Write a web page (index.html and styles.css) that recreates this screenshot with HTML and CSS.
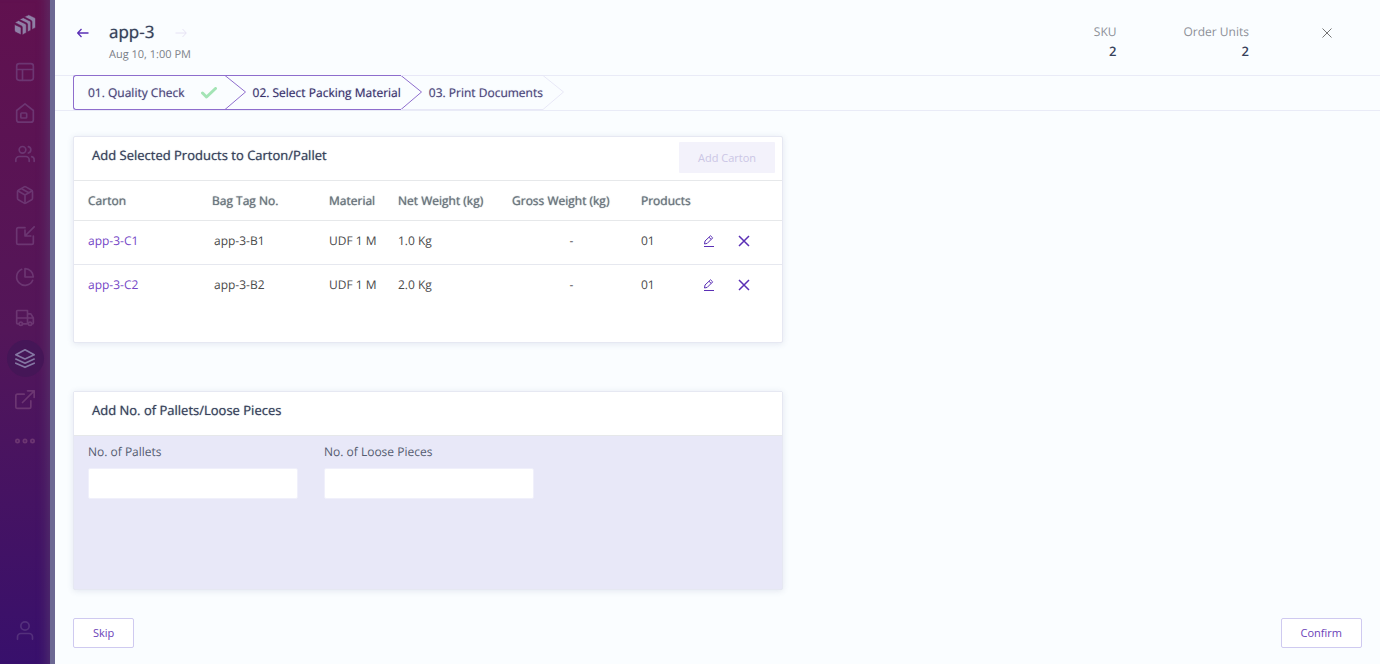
FILE: index.html
```html
<!DOCTYPE html>
<html lang="en">
<head>
    <meta charset="UTF-8">
    <meta name="viewport" content="width=device-width, initial-scale=1.0">
    <title>Select Packing Material</title>
    <link rel="stylesheet" href="styles.css">
</head>
<body>
    <nav class="sidebar" aria-label="Main">
        <a href="#" class="logo" aria-label="Home page">
            <svg width="22" height="22" viewBox="0 0 22 22">
                <path d="M.500 10.500l6.500 3v7.300l-5.300-2.600Q.500 17.500.500 16z"/>
                <path d="M.800 8.500l3.700-2 6.800 3.300q1 .6 1 1.700v7.200L8.300 21v-7.800q0-1-.8-1.300z"/>
                <path d="M5.500 5.500L9.200 3.700 15.800 7q1 .5 1 1.600v7.600l-3.200 1.800v-7.500q0-1-.9-1.500z"/>
                <path d="M10.300 2.800L14.800.800l5.700 2.800q1 .5 1 1.600v7.500q0 1-.9 1.500l-2.600 1.400V8q0-1.200-1-1.700z"/>
            </svg>
        </a>
        <a href="#" class="nav-item" aria-label="Dashboard">
            <svg class="icon" viewBox="0 0 24 24"><rect x="2" y="2" width="20" height="20" rx="3"/><path d="M2 9h20M9 22V9"/></svg>
        </a>
        <a href="#" class="nav-item" aria-label="Warehouse">
            <svg class="icon" viewBox="0 0 24 24"><path d="M2 9l10-8 10 8v11a3 3 0 0 1-3 3H5a3 3 0 0 1-3-3z"/><rect x="7" y="12" width="7" height="6" rx="1"/></svg>
        </a>
        <a href="#" class="nav-item" aria-label="Users">
            <svg class="icon" viewBox="0 0 24 24"><path d="M17 21v-2a4 4 0 0 0-4-4H5a4 4 0 0 0-4 4v2"/><circle cx="9" cy="7" r="4"/><path d="M23 21v-2a4 4 0 0 0-3-3.870M16 3.130a4 4 0 0 1 0 7.750"/></svg>
        </a>
        <a href="#" class="nav-item" aria-label="Products">
            <svg class="icon" viewBox="0 0 24 24"><path d="M16.500 9.400l-9-5.190M21 16V8a2 2 0 0 0-1-1.730l-7-4a2 2 0 0 0-2 0l-7 4A2 2 0 0 0 3 8v8a2 2 0 0 0 1 1.730l7 4a2 2 0 0 0 2 0l7-4A2 2 0 0 0 21 16z"/><path d="M3.270 6.960L12 12l8.730-5.040M12 22V12"/></svg>
        </a>
        <a href="#" class="nav-item" aria-label="Inbound">
            <svg class="icon" viewBox="0 0 24 24"><path d="M12 2H4a2 2 0 0 0-2 2v16a2 2 0 0 0 2 2h16a2 2 0 0 0 2-2v-8"/><path d="M23 1L12 12M12 5v7h7"/></svg>
        </a>
        <a href="#" class="nav-item" aria-label="Reports">
            <svg class="icon" viewBox="0 0 24 24"><path d="M21.210 15.890A10 10 0 1 1 8 2.830"/><path d="M22 12A10 10 0 0 0 12 2v10z"/></svg>
        </a>
        <a href="#" class="nav-item" aria-label="Shipping">
            <svg class="icon" viewBox="0 0 24 24"><path d="M5 19H3a1 1 0 0 1-1-1V4a1 1 0 0 1 1-1h12v16H9M15 7h4l3 5v6a1 1 0 0 1-1 1M2 12h20"/><circle cx="7" cy="19" r="2"/><circle cx="18" cy="19" r="2"/></svg>
        </a>
        <a href="#" class="nav-item active" aria-label="Packing" aria-current="page">
            <svg class="icon" viewBox="0 0 24 24"><path d="M12 1L1 7l11 5 11-5zM1 17l11 5 11-5M1 12l11 5 11-5"/></svg>
        </a>
        <a href="#" class="nav-item" aria-label="Outbound">
            <svg class="icon" viewBox="0 0 24 24"><path d="M19 13v7a2 2 0 0 1-2 2H3a2 2 0 0 1-2-2V7a2 2 0 0 1 2-2h8"/><path d="M15 1h8v8M9 15L23 1"/></svg>
        </a>
        <a href="#" class="nav-item" aria-label="More">
            <svg class="icon" viewBox="0 0 24 24"><circle cx="3" cy="12" r="2"/><circle cx="12" cy="12" r="2"/><circle cx="21" cy="12" r="2"/></svg>
        </a>
        <a href="#" class="nav-item profile" aria-label="Profile">
            <svg class="icon" viewBox="0 0 24 24"><path d="M3 22v-3a4 4 0 0 1 4-4h10a4 4 0 0 1 4 4v3"/><circle cx="12" cy="6" r="5"/></svg>
        </a>
    </nav>

    <div class="page">
        <header class="page-header">
            <button class="icon-btn back" aria-label="Previous order">
                <svg width="12" height="10" viewBox="0 0 12 10"><path d="M11.500 5H1M4.500 1L.700 5l3.800 4"/></svg>
            </button>
            <div class="order">
                <div class="order-title">
                    <h1>app-3</h1>
                    <button class="icon-btn next" aria-label="Next order" disabled>
                        <svg width="12" height="10" viewBox="0 0 12 10"><path d="M.500 5H11M7.500 1l3.800 4-3.800 4"/></svg>
                    </button>
                </div>
                <p>Aug 10, 1:00 PM</p>
            </div>
            <dl class="totals">
                <div><dt>SKU</dt><dd>2</dd></div>
                <div><dt>Order Units</dt><dd>2</dd></div>
            </dl>
            <button class="icon-btn close" aria-label="Close">
                <svg width="10" height="10" viewBox="0 0 10 10"><path d="M.500.500l9 9M9.500.500l-9 9"/></svg>
            </button>
        </header>

        <!-- Steps -->
        <ol class="steps">
            <li class="step done">
                <a href="#">01. Quality Check</a>
                <svg class="check" width="16" height="12" viewBox="0 0 16 12"><path d="M1.500 6l4 4 9-8.500"/></svg>
                <svg class="arrow" width="22" height="35" viewBox="0 0 22 35"><path d="M0 .500l20.500 16.500L0 34.500"/></svg>
            </li>
            <li class="step current">
                <a href="#" aria-current="step">02. Select Packing Material</a>
                <svg class="arrow" width="22" height="35" viewBox="0 0 22 35"><path d="M0 .500l20.500 16.500L0 34.500"/></svg>
            </li>
            <li class="step">
                <a href="#">03. Print Documents</a>
                <svg class="arrow" width="22" height="35" viewBox="0 0 22 35"><path d="M0 .500l20.500 16.500L0 34.500"/></svg>
            </li>
        </ol>

        <main>
            <!-- Cartons -->
            <section class="card cartons">
                <div class="card-header">
                    <h2>Add Selected Products to Carton/Pallet</h2>
                    <button class="add-btn" disabled>Add Carton</button>
                </div>
                <table>
                    <thead>
                        <tr>
                            <th class="col-carton">Carton</th>
                            <th class="col-bag">Bag Tag No.</th>
                            <th class="col-material">Material</th>
                            <th class="col-net">Net Weight (kg)</th>
                            <th class="col-gross">Gross Weight (kg)</th>
                            <th class="col-products">Products</th>
                            <th class="col-edit"></th>
                            <th></th>
                        </tr>
                    </thead>
                    <tbody>
                        <tr>
                            <td class="col-carton"><a href="#">app-3-C1</a></td>
                            <td class="bag">app-3-B1</td>
                            <td>UDF 1 M</td>
                            <td>1.0 Kg</td>
                            <td class="gross">-</td>
                            <td>01</td>
                            <td><button class="icon-btn edit" aria-label="Edit app-3-C1"><svg width="12" height="12" viewBox="0 0 12 12"><path d="M1 11.500h10M1.500 9l.5-3L7.500.800l2.200 2.100L4.200 8.400zM6 2.300l2.200 2.100"/></svg></button></td>
                            <td><button class="icon-btn remove" aria-label="Remove app-3-C1"><svg width="12" height="12" viewBox="0 0 12 12"><path d="M1 1l10 10M11 1L1 11"/></svg></button></td>
                        </tr>
                        <tr>
                            <td class="col-carton"><a href="#">app-3-C2</a></td>
                            <td class="bag">app-3-B2</td>
                            <td>UDF 1 M</td>
                            <td>2.0 Kg</td>
                            <td class="gross">-</td>
                            <td>01</td>
                            <td><button class="icon-btn edit" aria-label="Edit app-3-C2"><svg width="12" height="12" viewBox="0 0 12 12"><path d="M1 11.500h10M1.500 9l.5-3L7.500.800l2.200 2.100L4.200 8.400zM6 2.300l2.200 2.100"/></svg></button></td>
                            <td><button class="icon-btn remove" aria-label="Remove app-3-C2"><svg width="12" height="12" viewBox="0 0 12 12"><path d="M1 1l10 10M11 1L1 11"/></svg></button></td>
                        </tr>
                    </tbody>
                </table>
            </section>

            <!-- Pallets -->
            <section class="card pallets">
                <div class="card-header">
                    <h2>Add No. of Pallets/Loose Pieces</h2>
                </div>
                <form class="fields">
                    <div class="field">
                        <label for="pallets">No. of Pallets</label>
                        <input type="text" id="pallets">
                    </div>
                    <div class="field">
                        <label for="pieces">No. of Loose Pieces</label>
                        <input type="text" id="pieces">
                    </div>
                </form>
            </section>
        </main>

        <footer class="actions">
            <button class="btn">Skip</button>
            <button class="btn">Confirm</button>
        </footer>
    </div>
</body>
</html>
```
FILE: styles.css
```css
* {
    box-sizing: border-box;
}
body {
    display: flex;
    min-height: 100vh;
    margin: 0;
    background: #fafdff;
    color: #4a4a4a;
    font-family: "Open Sans", "Noto Sans", sans-serif;
    font-size: 12px;
    line-height: 18px;
    text-rendering: geometricPrecision;
}
h1, h2, p, dl, dd, ol {
    margin: 0;
    padding: 0;
}
a {
    color: inherit;
    text-decoration: none;
}
button, input {
    font: inherit;
}
svg {
    display: block;
    fill: none;
    stroke: currentColor;
}

/* sidebar */
.sidebar {
    display: flex;
    flex-direction: column;
    align-items: center;
    gap: 4px;
    flex: 0 0 55px;
    padding: 14px 0 15px;
    border-right: 5px solid #6c6893;
    background: linear-gradient(#61114f, #531659 50%, #38106c);
    box-shadow: inset -12px 0 10px -8px rgba(90, 60, 110, 0.6);
}
.logo {
    margin-bottom: 13px;
    color: #8f7fa6;
}
.logo svg {
    fill: currentColor;
    stroke: #61114f;
    stroke-width: 0.6;
}
.nav-item {
    display: flex;
    align-items: center;
    justify-content: center;
    width: 37px;
    height: 37px;
    border-radius: 50%;
    color: #6c3672;
}
.nav-item.active {
    background: #451657;
    color: #8577a3;
}
.nav-item.profile {
    margin-top: auto;
    color: #54307c;
}
.icon {
    width: 20px;
    height: 20px;
    stroke-width: 2;
    stroke-linecap: round;
    stroke-linejoin: round;
}

/* header */
.page {
    display: flex;
    flex-direction: column;
    flex: 1;
    min-width: 0;
}
.page-header {
    display: flex;
    height: 75px;
    padding: 20px 48px 0 22px;
}
.icon-btn {
    display: flex;
    align-items: center;
    padding: 0;
    border: none;
    background: none;
    color: #5a2fb5;
    cursor: pointer;
}
.page-header .icon-btn {
    height: 26px;
}
.icon-btn.back svg {
    stroke-width: 1.3;
}
.icon-btn.next {
    color: #e6e2f4;
}
.icon-btn.close {
    color: #757575;
}
.order {
    margin-left: 20px;
}
.order-title {
    display: flex;
    gap: 21px;
}
h1 {
    color: #36415a;
    font-size: 17px;
    font-weight: 500;
    line-height: 24px;
    text-shadow: 0 0 1px #7a8296;
}
.order p {
    color: #7b8087;
    font-size: 11px;
}
.totals {
    display: flex;
    gap: 67px;
    margin: 2px 73px 0 auto;
    text-align: right;
}
.totals dt {
    color: #8d9098;
    line-height: 20px;
}
.totals dd {
    color: #36415a;
    font-size: 13px;
    font-weight: 600;
    line-height: 18px;
}

/* steps */
.steps {
    display: flex;
    height: 36px;
    padding-left: 18px;
    border: solid #e9ebf7;
    border-width: 1px 0;
    list-style: none;
}
.step {
    position: relative;
    display: flex;
    align-items: center;
    height: 35px;
    margin-top: -1px;
    padding-left: 28px;
    border: solid #e8e8f7;
    border-width: 1px 0;
    color: #4a4579;
    font-weight: 500;
    text-shadow: 0 0 1px #a29fc0;
}
.step.done, .step.current {
    border-color: #8e6dcd;
}
.step.done {
    padding: 0 8px 0 14px;
    border-left-width: 1px;
    border-radius: 3px 0 0 3px;
}
.step.current {
    color: #37306a;
}
.check {
    margin-left: 16px;
    color: #a3e4b5;
    stroke-width: 3;
    stroke-linecap: round;
    stroke-linejoin: round;
}
.arrow {
    position: absolute;
    top: -1px;
    left: 100%;
    color: #e8e8f7;
}
.done .arrow, .current .arrow {
    color: #8e6dcd;
}

/* cards */
main {
    display: flex;
    flex-direction: column;
    gap: 48px;
    padding: 25px 16px 28px 18px;
}
.card {
    width: 55%;
    min-width: 690px;
    border: 1px solid #e6e8f2;
    border-radius: 2px;
    background: #fff;
    box-shadow: 0 1px 6px rgba(60, 70, 130, 0.12);
}
.card-header {
    display: flex;
    justify-content: space-between;
    height: 44px;
    padding: 5px 7px 0 18px;
    border-bottom: 1px solid #e6e8ea;
}
h2 {
    color: #36415a;
    font-size: 13px;
    font-weight: 500;
    line-height: 26px;
    text-shadow: 0 0 1px #7a8296;
}
.add-btn {
    width: 96px;
    height: 31px;
    border: none;
    border-radius: 1px;
    background: #f3f2fb;
    color: #cbc6e5;
    font-size: 11px;
}
.cartons {
    min-height: 207px;
}
table {
    width: 100%;
    border-spacing: 0;
    table-layout: fixed;
    text-align: left;
}
th, td {
    height: 44px;
    padding: 0 0 4px;
    white-space: nowrap;
}
th {
    height: 40px;
    padding: 0;
    border-bottom: 1px solid #e6e8ea;
    color: #6b757e;
    font-weight: 400;
    text-shadow: 0 0 1px #6b757e;
}
tbody tr:first-child td {
    border-bottom: 1px solid #e6e8ef;
}
th.col-carton, td.col-carton {
    width: 138px;
    padding-left: 14px;
}
td a {
    color: #7446c6;
}
.col-bag {
    width: 117px;
}
.col-material {
    width: 69px;
}
.col-net {
    width: 114px;
}
.col-gross {
    width: 129px;
}
.col-products {
    width: 62px;
}
.col-edit {
    width: 35px;
}
td.bag {
    padding-left: 2px;
}
td.gross {
    padding-right: 10px;
    text-align: center;
}
.remove svg {
    stroke-width: 1.5;
}

/* pallets form */
.pallets {
    min-height: 199px;
    background: #e8e8f8;
}
.pallets .card-header {
    background: #fff;
}
.fields {
    display: flex;
    gap: 26px;
    padding: 7px 14px;
}
.field {
    display: flex;
    flex-direction: column;
    gap: 7px;
    width: 210px;
}
.field label {
    color: #555c70;
}
.field input {
    width: 100%;
    height: 31px;
    padding: 0 8px;
    border: 1px solid #f0f0fb;
    border-radius: 2px;
}

/* footer */
.actions {
    display: flex;
    justify-content: space-between;
    padding: 0 18px 16px;
}
.btn {
    height: 30px;
    padding: 0 19px;
    border: 1px solid #cfcaf0;
    border-radius: 2px;
    background: #fff;
    color: #6b42b8;
    font-size: 11px;
    cursor: pointer;
}
```
